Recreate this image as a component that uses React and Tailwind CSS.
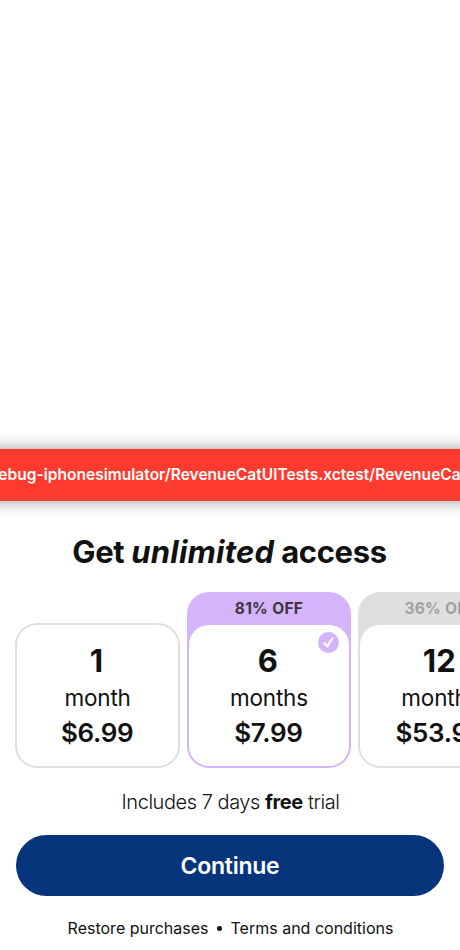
const plans = [
  { count: '1', unit: 'month', price: '$6.99' },
  { count: '6', unit: 'months', price: '$7.99', badge: '81% OFF', selected: true },
  { count: '12', unit: 'months', price: '$53.99', badge: '36% OFF' },
];

function PlanCard({ count, unit, price, badge, selected }) {
  const frame = selected ? 'bg-[#d4b5fc]' : 'bg-[#dfdfdf]';
  return (
    <div className={`flex w-[164.67px] shrink-0 flex-col rounded-[22px] p-[2px] ${frame}`}>
      {badge && (
        <div className={`h-[31px] pt-[2px] text-center text-[15.5px] leading-[25px] font-bold tracking-[0.3px] ${selected ? 'text-[#3c3541]' : 'text-[#a0a0a0]'}`}>
          {badge}
        </div>
      )}
      <div className="relative flex h-[141px] flex-col items-center rounded-[20px] bg-white pt-[17px] text-[#111]">
        <div className="h-[38px] pr-[2px] text-[31px] leading-[38px] font-bold tracking-[0.2px]">{count}</div>
        <div className="h-[36px] text-[22.5px] leading-[36px] tracking-[-0.2px]">{unit}</div>
        <div className="h-[34px] pr-[1px] text-[26px] leading-[34px] font-semibold tracking-[-0.3px]">{price}</div>
        {selected && (
          <svg className="absolute top-[7px] right-[10px]" width="21" height="21" viewBox="0 0 21 21">
            <circle cx="10.5" cy="10.5" r="10.5" fill="#d4b5fc" />
            <path d="M6.4 11.2 9.2 14.4 14.3 6.5" fill="none" stroke="#fff" strokeWidth="2.1" strokeLinecap="round" strokeLinejoin="round" />
          </svg>
        )}
      </div>
    </div>
  );
}

export default function App() {
  return (
    <main className="flex h-[950px] w-[460px] flex-col overflow-hidden bg-white font-['Inter',sans-serif] text-[#111]">
      <div className="-mx-[24px] mt-[449px] flex h-[52px] shrink-0 items-center justify-center bg-[#ff3b30] pr-[1px] text-[15.5px] font-semibold tracking-[0.03px] whitespace-nowrap text-white shadow-[0_0_15px_rgba(0,0,0,0.4)]">
        <span>ebug-iphonesimulator/RevenueCatUITests.xctest/RevenueCa</span>
      </div>
      <h1 className="mt-[31px] h-[40px] pr-[1px] text-center text-[31px] leading-[40px] font-bold tracking-[-0.38px] whitespace-nowrap">
        Get <em className="tracking-[0.22px]">unlimited</em> access
      </h1>
      <div className="mt-[20px] flex h-[176px] items-end gap-[6.67px] pl-[15.33px]">
        {plans.map((p) => <PlanCard key={p.count} {...p} />)}
      </div>
      <p className="mt-[20px] h-[28px] pl-[1px] text-center text-[20px] leading-[28px] font-light tracking-[-0.46px]">
        Includes 7 days <b className="font-bold tracking-[-0.4px]">free</b> trial
      </p>
      <button className="mx-[16px] mt-[19px] h-[61px] shrink-0 rounded-full bg-[#06357c] pt-[2px] text-[23px] font-semibold tracking-[-0.25px] text-white">Continue</button>
      <footer className="mt-[20px] flex h-[24px] items-center justify-center pl-[1px] text-[16px] whitespace-nowrap">
        <span>Restore purchases</span>
        <span className="mr-[9px] ml-[8px] size-[5px] rounded-full bg-[#111]" />
        <span>Terms and conditions</span>
      </footer>
    </main>
  );
}
